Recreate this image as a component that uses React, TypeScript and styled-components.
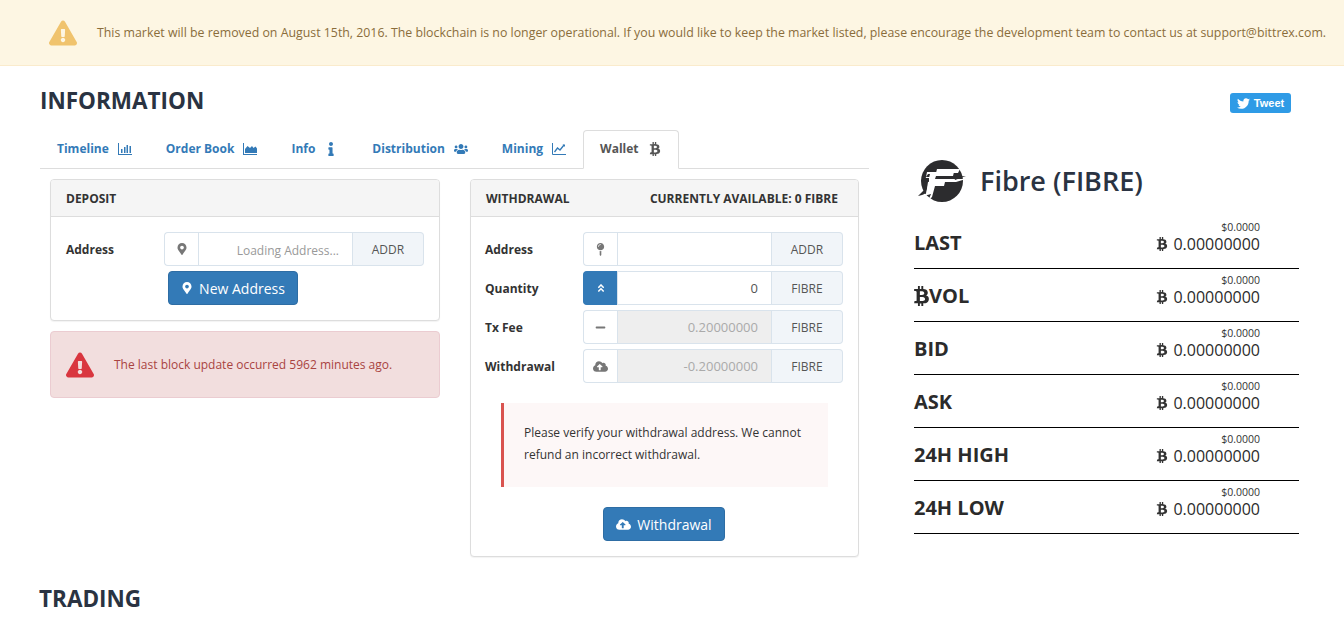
import React from "react";
import styled, { createGlobalStyle } from "styled-components";
import { FaBtc, FaInfo, FaUsers, FaMapMarkerAlt, FaMapPin, FaAngleDoubleUp, FaMinus, FaCloudUploadAlt, FaTwitter, FaExclamationTriangle } from "react-icons/fa";

const Global = createGlobalStyle`
  html, body { margin: 0; padding: 0; background: #fff; overflow: hidden; }
  body { font-family: "Open Sans", "Liberation Sans", sans-serif; color: #333; font-size: 12px; }
  * { box-sizing: border-box; }
`;

const Page = styled.div`width: 1344px; height: 639px; overflow: hidden;`;

const Banner = styled.div`
  height: 66px; background: #fdf6e3; border-bottom: 1px solid #faebcc;
  display: flex; align-items: center; padding-left: 49px; color: #8a6d3b; font-size: 12.35px; white-space: nowrap;
`;
const BannerIcon = styled(FaExclamationTriangle)`width: 28px; height: 26px; color: #f0c36d; margin-right: 20px; flex: none;`;

const Main = styled.div`display: grid; grid-template-columns: 829px 1fr; column-gap: 45px; padding: 0 45px 0 40px;`;
const Left = styled.div`display: flex; flex-direction: column;`;
const Right = styled.div`display: flex; flex-direction: column; position: relative; height: 492px;`;

const Heading = styled.h2`
  margin: 0; font-size: 22.5px; line-height: 30px; font-weight: 700; color: #2a3342; letter-spacing: 0;
`;
const InfoHeading = styled(Heading)`padding-top: 20px; height: 64px;`;
const TradingHeading = styled(Heading)`margin: 27px 0 0 -1px;`;

const Tabs = styled.div`display: flex; height: 39px; border-bottom: 1px solid #ddd;`;
const Tab = styled.div<{ $active?: boolean }>`
  height: 39px; display: flex; align-items: center; gap: 9px; padding: 0 16px 2px; font-weight: 700; font-size: 12px;
  color: ${(p) => (p.$active ? "#555" : "#337ab7")};
  border-radius: 4px 4px 0 0;
  border: 1px solid ${(p) => (p.$active ? "#ddd" : "transparent")};
  border-bottom-color: ${(p) => (p.$active ? "#fff" : "transparent")};
  background: ${(p) => (p.$active ? "#fff" : "transparent")};
  svg { width: 14px; height: 14px; flex: none; display: block; }
`;

const Columns = styled.div`display: grid; grid-template-columns: 390px 389px; column-gap: 30px; padding: 10px 10px 0; align-items: start;`;
const Stack = styled.div`display: flex; flex-direction: column; gap: 10px;`;

const Panel = styled.div`
  border: 1px solid #ddd; border-radius: 4px; background: #fff; box-shadow: 0 1px 1px rgba(0,0,0,.05);
`;
const PanelHead = styled.div`
  height: 37px; background: #f5f5f5; border-bottom: 1px solid #ddd; border-radius: 3px 3px 0 0;
  display: flex; align-items: center; justify-content: space-between; padding: 0 20px 0 15px;
  font-weight: 700; font-size: 12px; color: #333; text-transform: uppercase;
`;
const PanelBody = styled.div`padding: 15px 15px 15px;`;

const FormRow = styled.div`display: grid; grid-template-columns: 98px 260px; align-items: center; height: 34px; margin-bottom: 5px; font-weight: 700; font-size: 12px; color: #333;`;
const WithdrawBody = styled(PanelBody)`padding: 15px 15px 15px 14px;`;
const WdRow = styled(FormRow)`grid-template-columns: 98px 260px;`;

const Group = styled.div`display: flex; height: 34px; font-weight: 400;`;
const Pre = styled.div<{ $primary?: boolean }>`
  width: 34px; flex: none; display: flex; align-items: center; justify-content: center;
  border: 1px solid ${(p) => (p.$primary ? "#337ab7" : "#d9e3ec")}; border-right: 0;
  border-radius: 4px 0 0 4px;
  background: ${(p) => (p.$primary ? "#337ab7" : "#fff")};
  color: ${(p) => (p.$primary ? "#fff" : "#777")};
  svg { display: block; }
`;
const Field = styled.div<{ $disabled?: boolean }>`
  flex: 1; min-width: 0; display: flex; align-items: center; justify-content: flex-end; padding: 0 13px;
  border: 1px solid #d9e3ec; font-size: 13px;
  background: ${(p) => (p.$disabled ? "#eee" : "#fff")};
  color: ${(p) => (p.$disabled ? "#aaa" : "#555")};
`;
const Placeholder = styled.span`color: #999; font-size: 12px; position: relative; top: 1px;`;
const Post = styled.div`
  width: 71px; flex: none; display: flex; align-items: center; justify-content: center;
  border: 1px solid #d9e3ec; border-left: 0; border-radius: 0 4px 4px 0;
  background: #f1f5f9; color: #555; font-size: 12px;
`;

const Center = styled.div`display: flex; justify-content: center;`;
const Button = styled.div`
  height: 34px; display: inline-flex; align-items: center; gap: 6px; padding: 0 12px; font-size: 14px; color: #fff;
  background: #337ab7; border: 1px solid #2e6da4; border-radius: 4px;
`;
const DepositButton = styled(Center)`margin: 1px 0 0 -24px;`;

const Alert = styled.div`
  height: 67px; display: flex; align-items: center; padding-left: 15px; gap: 20px;
  background: #f2dede; border: 1px solid #ebccd1; border-radius: 4px; color: #a94442; font-size: 12px;
`;
const AlertIcon = styled(FaExclamationTriangle)`width: 28px; height: 26px; color: #d9363f; flex: none;`;

const Callout = styled.div`
  margin: 20px 15px 20px 16px; height: 84px; padding: 19px 20px; border-left: 3px solid #d9534f; background: #fdf7f7;
  font-size: 12px; line-height: 22px; color: #333;
`;

const TweetRow = styled.div`position: absolute; top: 27px; right: 8px;`;
const Tweet = styled.div`
  width: 61px; height: 20px; display: flex; align-items: center; justify-content: center; gap: 4px;
  background: #2f9be6; border-radius: 3px; color: #fff; font: 700 11px "Liberation Sans", Arial, sans-serif;
`;

const Coin = styled.div`display: flex; align-items: center; gap: 13px; margin: 94px 0 0 3px; height: 42px;`;
const CoinName = styled.div`font-size: 27px; font-weight: 600; color: #2a3342; line-height: 42px;`;

const Stat = styled.div`
  height: 53px; display: flex; justify-content: space-between; padding-right: 39px; border-bottom: 1px solid #000;
`;
const StatsList = styled.div`display: flex; flex-direction: column; margin-top: 14px;`;
const StatLabel = styled.div`font-size: 20px; font-weight: 700; color: #2b2b2b; line-height: 28px; display: flex; align-items: center; margin-top: 2px;`;
const StatValues = styled.div`text-align: right; display: flex; flex-direction: column; align-items: flex-end; margin-top: 5px;`;
const Usd = styled.div`font-size: 10.5px; line-height: 12px; color: #333;`;
const Btc = styled.div`font-size: 16px; line-height: 22px; color: #2b2b2b; display: flex; align-items: center; gap: 5px;`;
const BtcIcon = styled(FaBtc)`width: 12px; height: 14px; color: #333;`;
const VolIcon = styled(FaBtc)`width: 15px; height: 20px; color: #2b2b2b;`;

const BarIcon = () => (
  <svg viewBox="0 0 14 12" fill="currentColor"><path d="M0 0h1v11h13v1H0z" /><path d="M3 6h1.500v4H3zM6 4h1.500v6H6zM8.500 2H10v8H8.500zM11.500 3H13v7h-1.500z" /></svg>
);
const AreaIcon = () => (
  <svg viewBox="0 0 14 12" fill="currentColor"><path d="M0 0h1v11h13v1H0z" /><path d="M2 10V6l2.500-3 2.500 2 2-2 1.500 2 2-1.500 1.500 2V10z" /></svg>
);
const LineIcon = () => (
  <svg viewBox="0 0 14 12" fill="none" stroke="currentColor"><path d="M.5 0v11.500H14" /><path d="M2.500 9l3-4 2.500 2 4-5" strokeWidth="1.300" /><path d="M10.500 1.500H13V4" fill="currentColor" stroke="none" /></svg>
);
const FibreLogo = () => (
  <svg width="50" height="43" viewBox="0 0 50 43">
    <circle cx="25" cy="21" r="21" fill="#2c2c2e" />
    <path d="M1 36l8-2 3-13H8l1-4h5l1-3h-4l-2 3 1-5h27l-1 4H19l-1 3h31l-10 3H28l-1 4h-9l-3 11-4 4 3-7-13 3z" fill="#fff" />
    <path d="M20 9h23l-2 4H19zM13 14h5l-1 4h-5zM11 22h5l-3 12-4 1 2-13z" fill="#fff" />
    <path d="M1 36c3-1 5-1 8-3l-2-3zM8 18h4v3H7zM38 20l11-4-12 1z" fill="#2c2c2e" />
  </svg>
);

const stats = ["LAST", "VOL", "BID", "ASK", "24H HIGH", "24H LOW"];

export default function App() {
  return (
    <Page>
      <Global />
      <Banner>
        <BannerIcon />
        <span>This market will be removed on August 15th, 2016. The blockchain is no longer operational. If you would like to keep the market listed, please encourage the development team to contact us at support@bittrex.com.</span>
      </Banner>
      <Main>
        <Left>
          <InfoHeading>INFORMATION</InfoHeading>
          <Tabs>
            <Tab>Timeline <BarIcon /></Tab>
            <Tab>Order Book <AreaIcon /></Tab>
            <Tab>Info <FaInfo /></Tab>
            <Tab>Distribution <FaUsers /></Tab>
            <Tab>Mining <LineIcon /></Tab>
            <Tab $active>Wallet <FaBtc /></Tab>
          </Tabs>
          <Columns>
            <Stack>
              <Panel>
                <PanelHead>Deposit</PanelHead>
                <PanelBody>
                  <FormRow>
                    <span>Address</span>
                    <Group>
                      <Pre><FaMapMarkerAlt size={12} /></Pre>
                      <Field><Placeholder>Loading Address...</Placeholder></Field>
                      <Post>ADDR</Post>
                    </Group>
                  </FormRow>
                  <DepositButton>
                    <Button><FaMapMarkerAlt size={12} /> New Address</Button>
                  </DepositButton>
                </PanelBody>
              </Panel>
              <Alert>
                <AlertIcon />
                <span>The last block update occurred 5962 minutes ago.</span>
              </Alert>
            </Stack>
            <Panel>
              <PanelHead>
                <span>Withdrawal</span>
                <span>Currently Available: 0 FIBRE</span>
              </PanelHead>
              <WithdrawBody>
                <WdRow>
                  <span>Address</span>
                  <Group><Pre><FaMapPin size={13} /></Pre><Field /><Post>ADDR</Post></Group>
                </WdRow>
                <WdRow>
                  <span>Quantity</span>
                  <Group><Pre $primary><FaAngleDoubleUp size={10} /></Pre><Field>0</Field><Post>FIBRE</Post></Group>
                </WdRow>
                <WdRow>
                  <span>Tx Fee</span>
                  <Group><Pre><FaMinus size={11} /></Pre><Field $disabled>0.20000000</Field><Post>FIBRE</Post></Group>
                </WdRow>
                <WdRow>
                  <span>Withdrawal</span>
                  <Group><Pre><FaCloudUploadAlt size={15} /></Pre><Field $disabled>-0.20000000</Field><Post>FIBRE</Post></Group>
                </WdRow>
                <Callout>Please verify your withdrawal address. We cannot refund an incorrect withdrawal.</Callout>
                <Center>
                  <Button><FaCloudUploadAlt size={15} /> Withdrawal</Button>
                </Center>
              </WithdrawBody>
            </Panel>
          </Columns>
          <TradingHeading>TRADING</TradingHeading>
        </Left>
        <Right>
          <TweetRow><Tweet><FaTwitter size={13} /> Tweet</Tweet></TweetRow>
          <Coin><FibreLogo /><CoinName>Fibre (FIBRE)</CoinName></Coin>
          <StatsList>
            {stats.map((s) => (
              <Stat key={s}>
                <StatLabel>{s === "VOL" && <VolIcon />}{s}</StatLabel>
                <StatValues>
                  <Usd>$0.0000</Usd>
                  <Btc><BtcIcon /> 0.00000000</Btc>
                </StatValues>
              </Stat>
            ))}
          </StatsList>
        </Right>
      </Main>
    </Page>
  );
}
